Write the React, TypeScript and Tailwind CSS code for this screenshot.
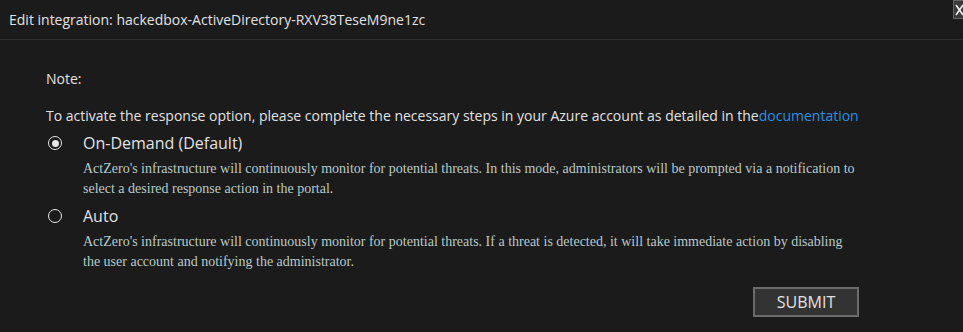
import { useState } from "react";

const options = [
  {
    id: "on-demand",
    label: "On-Demand (Default)",
    lines: [
      "ActZero's infrastructure will continuously monitor for potential threats. In this mode, administrators will be prompted via a notification to",
      "select a desired response action in the portal.",
    ],
  },
  {
    id: "auto",
    label: "Auto",
    lines: [
      "ActZero's infrastructure will continuously monitor for potential threats. If a threat is detected, it will take immediate action by disabling",
      "the user account and notifying the administrator.",
    ],
  },
];

function Radio({ checked }: { checked: boolean }) {
  return (
    <span className="flex h-[14px] w-[14px] items-center justify-center rounded-full border-[1.5px] border-[#e6e6e6]">
      {checked && <span className="h-[7px] w-[7px] rounded-full bg-[#e6e6e6]" />}
    </span>
  );
}

export default function App() {
  const [mode, setMode] = useState("on-demand");

  return (
    <div className="relative h-[332px] w-[963px] overflow-hidden bg-[#1b1b1b] font-['Open_Sans',sans-serif] text-[#e2e2e2]">
      <div className="flex h-[40px] items-center border-b border-[#2f2f2f] pl-[9px] text-[14px]">
        Edit integration: hackedbox-ActiveDirectory-RXV38TeseM9ne1zc
      </div>
      <button className="absolute left-[953px] top-0 flex h-[19px] w-[22px] items-center border border-[#666666] bg-[#3a3a3a] pl-[1px] text-[#f0f0f0]">
        <svg width="10" height="12" viewBox="0 0 10 12" fill="none" stroke="currentColor" strokeWidth="1.6">
          <path d="M1 1l7 10M8 1L1 11" />
        </svg>
      </button>

      <div className="px-[46px] pt-[29px] text-[14px]">
        <p className="leading-[20px]">Note:</p>
        <p className="mt-[17px] leading-[20px]">
          To activate the response option, please complete the necessary steps in your Azure account as detailed in the
          <a className="text-[#2b8fe0]">documentation</a>
        </p>

        <div className="mt-[6px] flex flex-col gap-[6px]">
          {options.map((o) => (
            <div key={o.id} className="flex cursor-pointer" onClick={() => setMode(o.id)}>
              <div className="flex h-[22px] w-[37px] items-center pl-[2px]">
                <Radio checked={mode === o.id} />
              </div>
              <div>
                <div className="text-[16px] leading-[22px]">{o.label}</div>
                <div className="mt-[5px] font-['Liberation_Serif',serif] text-[14px] leading-[20px] text-[#b9cac8]">
                  {o.lines.map((l) => (
                    <div key={l}>{l}</div>
                  ))}
                </div>
              </div>
            </div>
          ))}
        </div>
      </div>

      <div className="flex justify-end pr-[104px] pt-[15px]">
        <button className="h-[30px] w-[106px] border-2 border-[#6b6b6b] bg-[#333333] text-[16px] text-[#e2e2e2]">
          SUBMIT
        </button>
      </div>
    </div>
  );
}
